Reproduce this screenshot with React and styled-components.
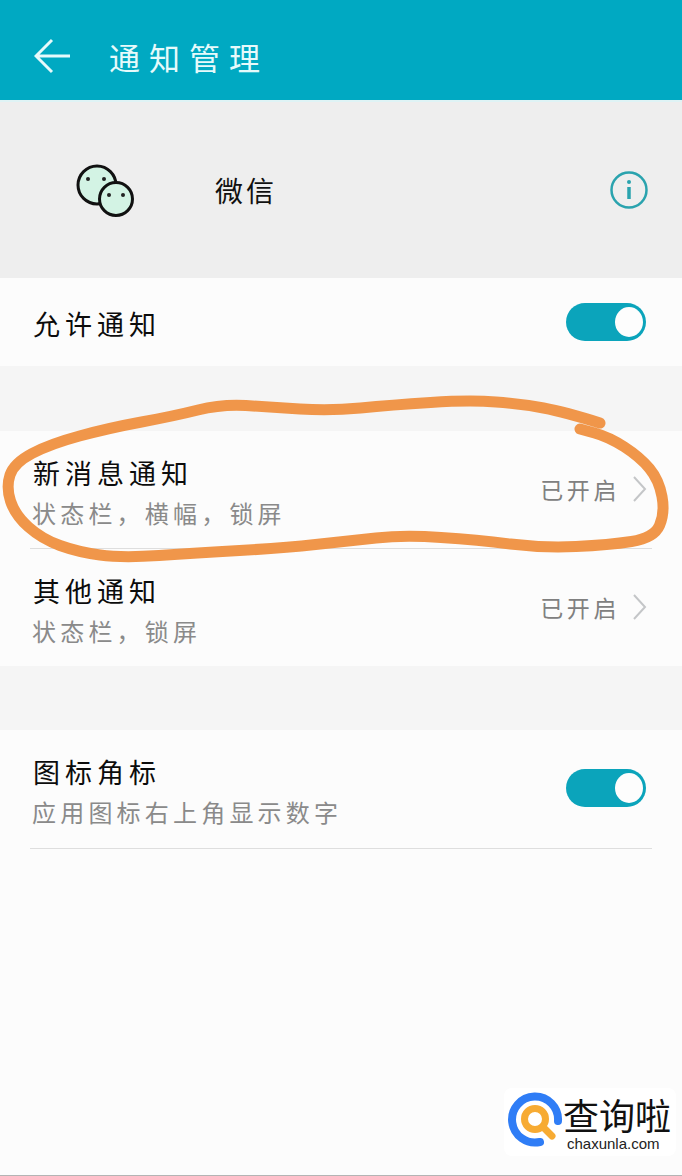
import React from 'react';
import styled, { createGlobalStyle } from 'styled-components';

const GlobalStyle = createGlobalStyle`
  html, body { margin: 0; padding: 0; background: #fcfcfc; }
  * { box-sizing: border-box; }
`;

const CJK = `"Noto Sans CJK SC", "Noto Sans", sans-serif`;

const Page = styled.div`
  position: relative;
  width: 682px;
  height: 1176px;
  overflow: hidden;
  display: flex;
  flex-direction: column;
  background: #fcfcfc;
  border-bottom: 1px solid #b4b4b4;
  font-family: ${CJK};
  color: #111;
`;

const Header = styled.header`
  height: 102px;
  flex: none;
  display: flex;
  align-items: center;
  gap: 38px;
  padding: 12px 0 0 34px;
  background: #00a9c2;
  border-bottom: 2px solid #dff3f5;
`;

const HeaderTitle = styled.h1`
  margin: 0;
  font-size: 31px;
  font-weight: 400;
  letter-spacing: 9px;
  color: #e6fafb;
`;

const AppPanel = styled.section`
  height: 176px;
  flex: none;
  display: flex;
  align-items: center;
  padding: 0 33px 0 76px;
  background: #eeeeee;
`;

const AppName = styled.span`
  margin-left: 79px;
  flex: 1;
  font-size: 28px;
  letter-spacing: 3px;
`;

const Gap = styled.div`
  flex: none;
  height: ${({ $h }) => $h}px;
  background: #f5f5f5;
`;

const Group = styled.section`
  flex: none;
  background: #fcfcfc;
`;

const Row = styled.div`
  height: ${({ $h }) => $h}px;
  margin: 0 30px;
  padding: ${({ $sub }) => ($sub ? '22px' : '4px')} 5px 0 3px;
  display: flex;
  align-items: ${({ $sub }) => ($sub ? 'flex-start' : 'center')};
  justify-content: space-between;
  border-bottom: ${({ $line }) => ($line ? '1px solid #dedede' : '0')};
`;

const RowText = styled.div`
  display: flex;
  flex-direction: column;
`;

const RowTitle = styled.div`
  font-size: 27px;
  line-height: 40px;
  letter-spacing: 5px;
  color: #0c0c0c;
`;

const RowSub = styled.div`
  margin-left: -1px;
  font-size: 24px;
  line-height: 40px;
  letter-spacing: 4.2px;
  color: #8a8a8a;
  white-space: nowrap;
`;

const Status = styled.div`
  margin-top: 16px;
  display: flex;
  align-items: center;
  gap: 12px;
  font-size: 23px;
  line-height: 40px;
  letter-spacing: 3.6px;
  color: #808080;
`;

const Toggle = styled.div`
  width: 80px;
  height: 38px;
  margin-top: ${({ $top }) => $top}px;
  margin-right: 1px;
  padding: 0 3px;
  display: flex;
  align-items: center;
  justify-content: flex-end;
  border-radius: 19px;
  background: #0ba4bb;
`;

const Thumb = styled.span`
  width: 28px;
  height: 30px;
  border-radius: 50%;
  background: #fdfdfd;
`;

const Scribble = styled.svg`
  position: absolute;
  inset: 0;
  pointer-events: none;
`;

const Watermark = styled.div`
  position: absolute;
  left: 504px;
  top: 1088px;
  width: 172px;
  height: 68px;
  display: flex;
  background: #ffffff;
  border-radius: 8px;
  padding: 4px 0 0 4px;
`;

const WatermarkText = styled.div`
  display: flex;
  flex-direction: column;
  align-items: flex-start;
  margin-left: -1px;
`;

const WatermarkName = styled.div`
  font-family: "Noto Sans CJK SC", serif;
  font-size: 36px;
  line-height: 44px;
  color: #111;
  white-space: nowrap;
`;

const WatermarkUrl = styled.div`
  margin-left: 4px;
  font-family: "Liberation Sans", sans-serif;
  font-size: 15px;
  line-height: 16px;
  color: #222;
`;

// turns the traced points into one smooth stroke
const points = [
  [600, 423], [565, 412], [522, 404], [470, 400], [391, 405], [330, 411], [270, 407], [222, 404],
  [174, 416], [109, 428], [50, 444], [14, 463], [6, 487], [15, 515], [42, 539], [78, 552],
  [122, 558], [196, 553], [283, 548], [348, 541], [404, 535], [478, 540], [543, 548], [609, 545],
  [654, 538], [665, 513], [659, 480], [640, 457], [609, 437], [580, 429],
];

const smooth = (pts) => {
  let d = `M${pts[0][0]} ${pts[0][1]}`;
  for (let i = 1; i < pts.length - 1; i++) {
    const mx = (pts[i][0] + pts[i + 1][0]) / 2;
    const my = (pts[i][1] + pts[i + 1][1]) / 2;
    d += ` Q${pts[i][0]} ${pts[i][1]} ${mx} ${my}`;
  }
  const last = pts[pts.length - 1];
  return `${d} L${last[0]} ${last[1]}`;
};

const BackArrow = () => (
  <svg width="37" height="36" viewBox="0 0 37 36" fill="none" stroke="#e6fafb" strokeWidth="3">
    <path d="M36 18H3M18 2 2 18l16 16" />
  </svg>
);

const WeChatIcon = () => (
  <svg width="60" height="54" viewBox="0 0 60 54">
    <circle cx="21" cy="22" r="19" fill="#d3f3e4" stroke="#111" strokeWidth="3" />
    <circle cx="40" cy="36" r="16.5" fill="#d3f3e4" stroke="#111" strokeWidth="3" />
    <circle cx="12" cy="16" r="2" fill="#222" />
    <circle cx="28" cy="16" r="2" fill="#222" />
    <circle cx="33" cy="32" r="2" fill="#222" />
    <circle cx="47" cy="32" r="2" fill="#222" />
  </svg>
);

const InfoIcon = () => (
  <svg width="40" height="40" viewBox="0 0 40 40" fill="none">
    <circle cx="20" cy="20" r="17.5" stroke="#2aa3ae" strokeWidth="2.5" />
    <circle cx="20" cy="12" r="2" fill="#2aa3ae" />
    <path d="M20 17v12" stroke="#2aa3ae" strokeWidth="3.5" />
  </svg>
);

const Chevron = () => (
  <svg width="15" height="26" viewBox="0 0 15 26" fill="none" stroke="#c4c6c8" strokeWidth="2">
    <path d="M2 1l11 12L2 25" />
  </svg>
);

const LogoMark = () => (
  <svg width="56" height="56" viewBox="0 0 56 56" fill="none">
    <path d="M50 29A23 23 0 1 0 32 50" stroke="#2f7df6" strokeWidth="8" strokeLinecap="round" />
    <circle cx="27" cy="27" r="10.5" stroke="#f7ab33" strokeWidth="7" />
    <path d="M35 35l9 9" stroke="#f7ab33" strokeWidth="7" strokeLinecap="round" />
  </svg>
);

const App = () => {
  return (
    <Page>
      <GlobalStyle />
      <Header>
        <BackArrow />
        <HeaderTitle>通知管理</HeaderTitle>
      </Header>
      <AppPanel>
        <WeChatIcon />
        <AppName>微信</AppName>
        <InfoIcon />
      </AppPanel>
      <Group>
        <Row $h={88}>
          <RowTitle>允许通知</RowTitle>
          <Toggle $top={-4}><Thumb /></Toggle>
        </Row>
      </Group>
      <Gap $h={65} />
      <Group>
        <Row $h={118} $sub $line>
          <RowText>
            <RowTitle>新消息通知</RowTitle>
            <RowSub>状态栏，横幅，锁屏</RowSub>
          </RowText>
          <Status>已开启<Chevron /></Status>
        </Row>
        <Row $h={117} $sub>
          <RowText>
            <RowTitle>其他通知</RowTitle>
            <RowSub>状态栏，锁屏</RowSub>
          </RowText>
          <Status>已开启<Chevron /></Status>
        </Row>
      </Group>
      <Gap $h={64} />
      <Group>
        <Row $h={119} $sub $line>
          <RowText>
            <RowTitle>图标角标</RowTitle>
            <RowSub>应用图标右上角显示数字</RowSub>
          </RowText>
          <Toggle $top={17}><Thumb /></Toggle>
        </Row>
      </Group>
      <Scribble width="682" height="1176" viewBox="0 0 682 1176" fill="none">
        <path d={smooth(points)} stroke="#f0964a" strokeWidth="11" strokeLinecap="round" strokeLinejoin="round" />
      </Scribble>
      <Watermark>
        <LogoMark />
        <WatermarkText>
          <WatermarkName>查询啦</WatermarkName>
          <WatermarkUrl>chaxunla.com</WatermarkUrl>
        </WatermarkText>
      </Watermark>
    </Page>
  );
};

export default App;
